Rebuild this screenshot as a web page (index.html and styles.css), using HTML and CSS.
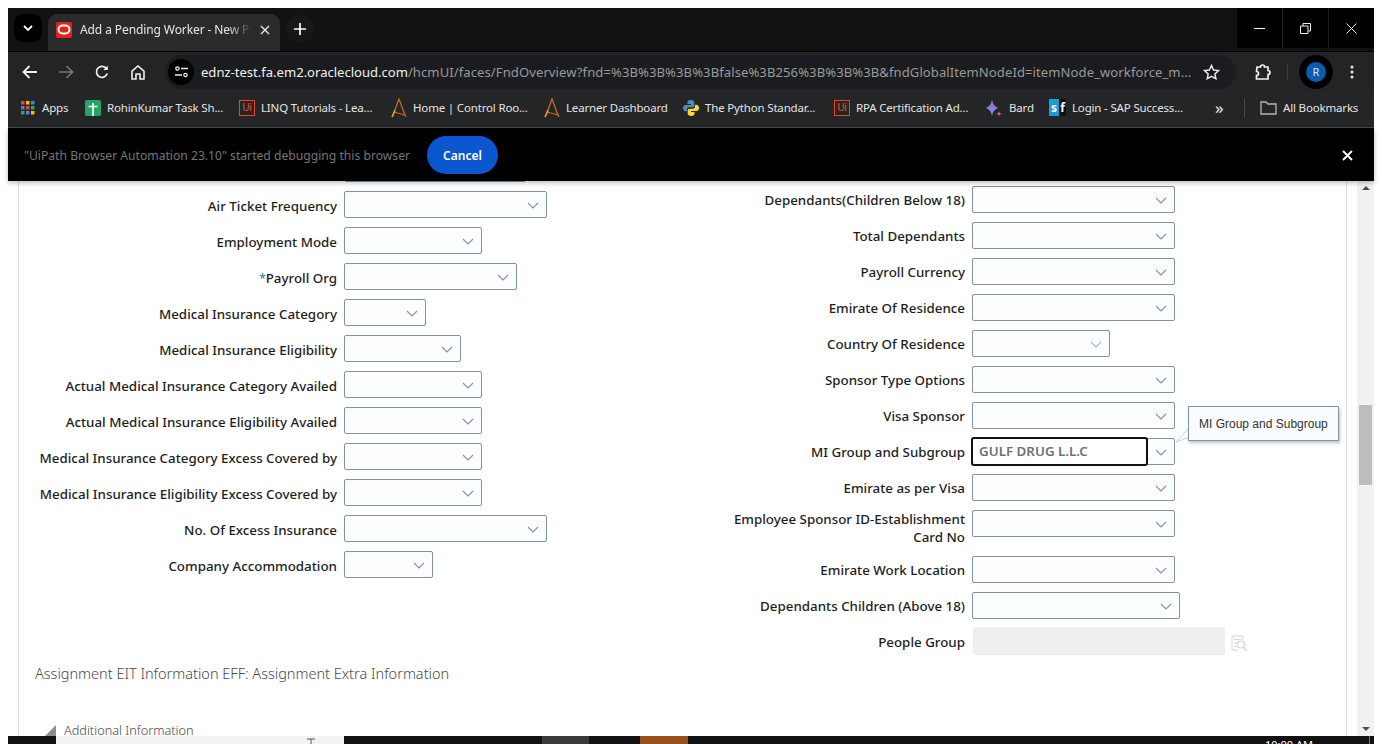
FILE: index.html
```html
<!DOCTYPE html>
<html lang="en">

<head>
    <meta charset="UTF-8">
    <title>Add a Pending Worker</title>
    <link rel="stylesheet" href="styles.css">
</head>

<body>
    <svg class="defs" width="0" height="0">
        <symbol id="chev" viewBox="0 0 12 7"><path d="M1 1l5 5 5-5" fill="none" stroke="currentColor" stroke-width="1.1"/></symbol>
        <symbol id="aa" viewBox="0 0 16 20"><path d="M1 19C4 13 6 6 8 1c2 5 4 12 7 18M3 14c3 1 7 2 11 3" fill="none" stroke="#c8642a" stroke-width="1.3"/><path d="M1 19c1-2 2-4 3-7" fill="none" stroke="#e3a82f" stroke-width="1.4"/></symbol>
    </svg>
    <div class="window">
        <div class="tabstrip">
            <div class="tab-search"><svg width="10" height="7" viewBox="0 0 10 7"><path d="M1 1l4 4 4-4" fill="none" stroke="#fff" stroke-width="1.8"/></svg></div>
            <div class="tab">
                <svg class="favicon" width="16" height="16" viewBox="0 0 16 16"><rect width="16" height="16" rx="2" fill="#e2231a"/><rect x="2.5" y="3.5" width="11" height="8" rx="4" fill="none" stroke="#fff" stroke-width="2"/></svg>
                <span class="tab-title">Add a Pending Worker - New Pe</span>
                <svg width="10" height="10" viewBox="0 0 10 10"><path d="M1 1l8 8M9 1l-8 8" stroke="#e8e8e8" stroke-width="1.4"/></svg>
            </div>
            <div class="new-tab"><svg width="12" height="12" viewBox="0 0 12 12"><path d="M6 0v12M0 6h12" stroke="#fff" stroke-width="1.7"/></svg></div>
            <div class="win-btns">
                <div class="win-btn"><svg width="11" height="11" viewBox="0 0 11 11"><path d="M0 5.5h11" stroke="#eee" stroke-width="1.1"/></svg></div>
                <div class="win-btn"><svg width="11" height="11" viewBox="0 0 11 11"><path d="M.5 3h7.5v7.500H.5zM3 3V.5h7.500V8H8" fill="none" stroke="#eee"/></svg></div>
                <div class="win-btn"><svg width="11" height="11" viewBox="0 0 11 11"><path d="M.5.5l10 10M10.500.5l-10 10" stroke="#eee"/></svg></div>
            </div>
        </div>

        <div class="toolbar">
            <div class="tool"><svg width="16" height="14" viewBox="0 0 16 14"><path d="M15 7H2M7.500 1L1.500 7l6 6" fill="none" stroke="#f0f0f0" stroke-width="1.8"/></svg></div>
            <div class="tool"><svg width="16" height="14" viewBox="0 0 16 14"><path d="M1 7h13M8.500 1l6 6-6 6" fill="none" stroke="#777" stroke-width="1.700"/></svg></div>
            <div class="tool"><svg width="14" height="14" viewBox="0 0 14 14"><path d="M12.200 8.500A5.500 5.500 0 1 1 11 3.100" fill="none" stroke="#f0f0f0" stroke-width="1.700"/><path d="M12.800.5v4.500H8.300z" fill="#f0f0f0"/></svg></div>
            <div class="tool"><svg width="14" height="15" viewBox="0 0 14 15"><path d="M1 6.200L7 1l6 5.200V14H9V9H5v5H1z" fill="none" stroke="#f0f0f0" stroke-width="1.600"/></svg></div>
            <div class="omnibox">
                <div class="site-info"><svg width="13" height="12" viewBox="0 0 13 12"><circle cx="2.500" cy="2.500" r="1.700" fill="none" stroke="#eee" stroke-width="1.200"/><path d="M6 2.500h7M0 9h7" stroke="#eee" stroke-width="1.300"/><circle cx="10.500" cy="9" r="1.700" fill="none" stroke="#eee" stroke-width="1.200"/></svg></div>
                <div class="url"><span class="host">ednz-test.fa.em2.oraclecloud.com</span>/hcmUI/faces/FndOverview?fnd=%3B%3B%3B%3Bfalse%3B256%3B%3B%3B&amp;fndGlobalItemNodeId=itemNode_workforce_m...</div>
                <svg class="star" width="17" height="16" viewBox="0 0 17 16"><path d="M8.500 1.500l2.100 4.500 4.900.6-3.600 3.300 1 4.800-4.400-2.400-4.300 2.400 1-4.800L1.500 6.600l4.900-.6z" fill="none" stroke="#e8e8e8" stroke-width="1.500"/></svg>
            </div>
            <div class="tool ext"><svg width="17" height="17" viewBox="0 0 17 17"><path d="M3 3h3.500a2 2 0 0 1 4 0H14v3.500a2 2 0 0 1 0 4V15H2.500v-3.500a2 2 0 0 0 0-4z" fill="none" stroke="#f2f2f2" stroke-width="1.700"/></svg></div>
            <div class="tool-sep"></div>
            <div class="avatar-ring"><div class="avatar">R</div></div>
            <div class="tool menu"><svg width="4" height="14" viewBox="0 0 4 14"><circle cx="2" cy="2" r="1.500" fill="#eee"/><circle cx="2" cy="7" r="1.500" fill="#eee"/><circle cx="2" cy="12" r="1.500" fill="#eee"/></svg></div>
        </div>

        <div class="bookmarks">
            <div class="bm">
                <svg class="bm-apps" width="14" height="14" viewBox="0 0 14 14"><path d="M0 0h3.500v3.500H0z" fill="#ea4335"/><path d="M5 0h3.500v3.500H5z" fill="#fbbc04"/><path d="M10 0h3.500v3.500H10z" fill="#4285f4"/><path d="M0 5h3.500v3.500H0z" fill="#4285f4"/><path d="M5 5h3.500v3.500H5z" fill="#ea4335"/><path d="M10 5h3.500v3.500H10z" fill="#34a853"/><path d="M0 10h3.500v3.500H0z" fill="#34a853"/><path d="M5 10h3.500v3.500H5z" fill="#4285f4"/><path d="M10 10h3.500v3.500H10z" fill="#fbbc04"/></svg>
                <span>Apps</span>
            </div>
            <div class="bm">
                <svg width="16" height="16" viewBox="0 0 16 16"><rect width="16" height="16" rx="1.500" fill="#23a566"/><path d="M8 3v13M3.500 6.500h9" stroke="#fff" stroke-width="1.700"/></svg>
                <span>RohinKumar Task Sh...</span>
            </div>
            <div class="bm"><span class="ui-logo">Ui</span><span>LINQ Tutorials - Lea...</span></div>
            <div class="bm"><svg width="16" height="20" viewBox="0 0 16 20"><use href="#aa"/></svg><span>Home | Control Roo...</span></div>
            <div class="bm"><svg width="16" height="20" viewBox="0 0 16 20"><use href="#aa"/></svg><span>Learner Dashboard</span></div>
            <div class="bm">
                <svg width="16" height="16" viewBox="0 0 16 16"><path d="M8 0C5 0 4.500 1.300 4.500 2.500V4H8v1H2.500C1 5 0 6.200 0 8s1 3.200 2.500 3.200H4V9.500C4 8 5 7.300 6.200 7.300h3.300c1 0 1.800-.8 1.800-1.800V2.500C11.300 1 10 0 8 0z" fill="#4b8bbe"/><path d="M8 16c3 0 3.500-1.300 3.500-2.500V12H8v-1h5.500C15 11 16 9.800 16 8s-1-3.200-2.500-3.200H12v1.700C12 8 11 8.700 9.800 8.700H6.500c-1 0-1.800.8-1.800 1.800v3C4.700 15 6 16 8 16z" fill="#ffd43b"/></svg>
                <span>The Python Standar...</span>
            </div>
            <div class="bm"><span class="ui-logo">Ui</span><span>RPA Certification Ad...</span></div>
            <div class="bm">
                <svg width="18" height="18" viewBox="0 0 18 18"><path d="M7 1c.6 4 2.500 6.500 6 8-3.500 1.500-5.400 4-6 8-.6-4-2.500-6.500-6-8 3.500-1.500 5.400-4 6-8z" fill="#6f8fe8"/><path d="M7 1c.6 4 2.500 6.500 6 8H1c3.500-1.500 5.400-4 6-8z" fill="#9a6fd8"/><path d="M14 12c.2 1.500.9 2.300 2.500 2.700-1.600.4-2.300 1.200-2.500 2.800-.2-1.600-.9-2.400-2.500-2.800 1.600-.4 2.300-1.200 2.500-2.700z" fill="#d8648a"/></svg>
                <span>Bard</span>
            </div>
            <div class="bm"><span class="sf-logo"><i>s</i><b>f</b></span><span>Login - SAP Success...</span></div>
            <div class="bm-more">»</div>
            <div class="bm-sep"></div>
            <div class="bm bm-all">
                <svg width="17" height="14" viewBox="0 0 17 14"><path d="M1 1h5l2 2h8v10H1z" fill="none" stroke="#b5b5b5" stroke-width="1.300"/></svg>
                <span>All Bookmarks</span>
            </div>
        </div>

        <div class="infobar">
            <span class="info-text">"UiPath Browser Automation 23.10" started debugging this browser</span>
            <span class="cancel">Cancel</span>
            <svg class="info-close" width="11" height="11" viewBox="0 0 11 11"><path d="M1 1l9 9M10 1l-9 9" stroke="#fff" stroke-width="1.800"/></svg>
        </div>

        <div class="content">
            <div class="page">
                <div class="sheet">
                    <div class="form">
                        <div class="col col-left">
                            <div class="row"><label></label><div class="select w182"></div></div>
                            <div class="row"><label>Air Ticket Frequency</label><div class="select w203"><svg><use href="#chev"/></svg></div></div>
                            <div class="row"><label>Employment Mode</label><div class="select w138"><svg><use href="#chev"/></svg></div></div>
                            <div class="row"><label><em>*</em>Payroll Org</label><div class="select w173"><svg><use href="#chev"/></svg></div></div>
                            <div class="row"><label>Medical Insurance Category</label><div class="select w82"><svg><use href="#chev"/></svg></div></div>
                            <div class="row"><label>Medical Insurance Eligibility</label><div class="select w117"><svg><use href="#chev"/></svg></div></div>
                            <div class="row"><label>Actual Medical Insurance Category Availed</label><div class="select w138"><svg><use href="#chev"/></svg></div></div>
                            <div class="row"><label>Actual Medical Insurance Eligibility Availed</label><div class="select w138"><svg><use href="#chev"/></svg></div></div>
                            <div class="row"><label>Medical Insurance Category Excess Covered by</label><div class="select w138"><svg><use href="#chev"/></svg></div></div>
                            <div class="row"><label>Medical Insurance Eligibility Excess Covered by</label><div class="select w138"><svg><use href="#chev"/></svg></div></div>
                            <div class="row"><label>No. Of Excess Insurance</label><div class="select w203"><svg><use href="#chev"/></svg></div></div>
                            <div class="row"><label>Company Accommodation</label><div class="select w89"><svg><use href="#chev"/></svg></div></div>
                        </div>
                        <div class="col col-right">
                            <div class="row"><label>Dependants(Children Below 18)</label><div class="select w203"><svg><use href="#chev"/></svg></div></div>
                            <div class="row"><label>Total Dependants</label><div class="select w203"><svg><use href="#chev"/></svg></div></div>
                            <div class="row"><label>Payroll Currency</label><div class="select w203"><svg><use href="#chev"/></svg></div></div>
                            <div class="row"><label>Emirate Of Residence</label><div class="select w203"><svg><use href="#chev"/></svg></div></div>
                            <div class="row"><label>Country Of Residence</label><div class="select select-soft w138"><svg><use href="#chev"/></svg></div></div>
                            <div class="row"><label>Sponsor Type Options</label><div class="select w203"><svg><use href="#chev"/></svg></div></div>
                            <div class="row"><label>Visa Sponsor</label><div class="select w203"><svg><use href="#chev"/></svg></div></div>
                            <div class="row"><label>MI Group and Subgroup</label>
                                <div class="select w203"><div class="focused">GULF DRUG L.L.C</div><svg><use href="#chev"/></svg></div>
                            </div>
                            <div class="row"><label>Emirate as per Visa</label><div class="select w203"><svg><use href="#chev"/></svg></div></div>
                            <div class="row row-tall"><label>Employee Sponsor ID-Establishment Card No</label><div class="select w203"><svg><use href="#chev"/></svg></div></div>
                            <div class="row"><label>Emirate Work Location</label><div class="select w203"><svg><use href="#chev"/></svg></div></div>
                            <div class="row"><label>Dependants Children (Above 18)</label><div class="select w208"><svg><use href="#chev"/></svg></div></div>
                            <div class="row"><label>People Group</label><div class="disabled"></div>
                                <svg class="lookup" width="16" height="17" viewBox="0 0 16 17"><path d="M12 5V1H1v14h6M3 4.500h7M3 8h3M3 11.500h3" fill="none" stroke="#d4d4d4"/><circle cx="10" cy="9.500" r="3.500" fill="none" stroke="#d4d4d4" stroke-width="1.200"/><path d="M12.500 12l3 3.500" stroke="#d4d4d4" stroke-width="1.200"/></svg>
                            </div>
                        </div>
                    </div>
                    <h2 class="section-title">Assignment EIT Information EFF: Assignment Extra Information</h2>
                    <div class="sub-head"><span class="tri"></span>Additional Information</div>
                </div>
            </div>
            <div class="scrollbar">
                <span class="arrow-up"></span>
                <div class="thumb"></div>
                <span class="arrow-down"></span>
            </div>
            <svg class="tip-tail" width="16" height="16" viewBox="0 0 16 16"><path d="M15 1v9L1 15z" fill="#fff"/><path d="M14 1L1 15l14-5" fill="none" stroke="#c3ced6"/></svg>
            <div class="tooltip">MI Group and Subgroup</div>
        </div>

        <div class="taskbar">
            <div class="task-search"><svg width="10" height="6" viewBox="0 0 10 6"><path d="M1 1h8M5 1v5" stroke="#555"/></svg></div>
            <div class="task-app"></div>
            <div class="task-hot"></div>
            <div class="task-time">10:00 AM</div>
            <div class="task-sep"></div>
        </div>
    </div>
</body>

</html>
```

FILE: styles.css
```css
* {
    box-sizing: border-box;
    margin: 0;
    padding: 0;
}

html,
body {
    height: 744px;
    overflow: hidden;
    background: #fff;
}

.defs {
    position: absolute;
}

.window {
    width: 1366px;
    height: 728px;
    margin: 8px 0 0 8px;
    font-family: "Noto Sans", sans-serif;
}

/* browser chrome */
.tabstrip {
    display: flex;
    height: 44px;
    background: #111213;
    border-bottom: 1px solid #000;
}

.tab-search {
    display: flex;
    align-items: center;
    justify-content: center;
    width: 28px;
    height: 28px;
    margin: 6px 0 0 6px;
    background: #000;
    border-radius: 9px;
}

.tab {
    display: flex;
    align-items: center;
    width: 232px;
    height: 37px;
    margin: 6px 0 0 6px;
    padding: 0 10px 6px 8px;
    background: #2a2b2d;
    border-radius: 9px 9px 0 0;
}

.favicon {
    flex: none;
}

.tab-title {
    flex: 1;
    margin: 0 8px;
    overflow: hidden;
    color: #e6e6e6;
    font-size: 12px;
    letter-spacing: -0.1px;
    white-space: nowrap;
    -webkit-mask-image: linear-gradient(to right, #000 86%, transparent 100%);
    mask-image: linear-gradient(to right, #000 86%, transparent 100%);
}

.new-tab {
    display: flex;
    align-items: center;
    justify-content: center;
    width: 28px;
    height: 28px;
    margin: 7px 0 0 6px;
    background: #161718;
    border-radius: 50%;
}

.win-btns {
    display: flex;
    gap: 1px;
    height: 40px;
    margin-left: auto;
    background: #1c1c1c;
}

.win-btn {
    display: flex;
    align-items: center;
    justify-content: center;
    width: 45px;
    background: #000;
}

.toolbar {
    display: flex;
    align-items: center;
    height: 40px;
    padding-left: 4px;
    background: #232426;
}

.tool {
    display: flex;
    align-items: center;
    justify-content: center;
    flex: none;
    width: 36px;
    height: 36px;
}

.omnibox {
    display: flex;
    align-items: center;
    width: 1071px;
    height: 34px;
    margin-left: 9px;
    background: #1a1c1f;
    border-radius: 17px;
}

.site-info {
    display: flex;
    align-items: center;
    justify-content: center;
    flex: none;
    width: 26px;
    height: 26px;
    margin-left: 3px;
    background: #000;
    border-radius: 50%;
}

.url {
    flex: none;
    width: 991px;
    margin-left: 7px;
    color: #9a9a9a;
    font-size: 13.050px;
    letter-spacing: 0.09px;
    white-space: nowrap;
}

.host {
    color: #f1f1f1;
    letter-spacing: 0;
}

.star {
    margin-left: 11px;
}

.ext {
    margin-left: 8px;
}

.tool-sep {
    width: 1px;
    height: 18px;
    margin-left: 7px;
    background: #3c3c3c;
}

.avatar-ring {
    display: flex;
    align-items: center;
    justify-content: center;
    width: 34px;
    height: 34px;
    margin-left: 11px;
    background: #000;
    border-radius: 50%;
}

.avatar {
    width: 20px;
    height: 20px;
    color: #d8e8f8;
    background: #0b5cad;
    border-radius: 50%;
    font-size: 11px;
    line-height: 20px;
    text-align: center;
}

.menu {
    margin-left: 1px;
}

.bookmarks {
    display: grid;
    grid-template-columns: 64px 154px 152px 153px 139px 151px 151px 64px 161px 34px 16px auto;
    align-items: center;
    height: 36px;
    padding: 0 0 4px 13px;
    background: #242527;
    border-bottom: 1px solid #4a4a4a;
}

.bm {
    display: flex;
    align-items: center;
    gap: 6px;
    color: #e4e4e4;
    font-size: 11.500px;
    letter-spacing: -0.17px;
    white-space: nowrap;
}

.bm svg {
    flex: none;
}

.bm-apps {
    margin-right: 1px;
}

.ui-logo {
    flex: none;
    width: 16px;
    height: 16px;
    color: #f0562a;
    border: 1.500px solid #e8481c;
    font-size: 10px;
    line-height: 13px;
    text-align: center;
}

.sf-logo {
    display: flex;
    flex: none;
    width: 17px;
    height: 17px;
    font-size: 12px;
    line-height: 17px;
    letter-spacing: 0;
}

.sf-logo i {
    width: 10px;
    color: #fff;
    background: #1a9cd8;
    font-style: normal;
    font-weight: 700;
    text-align: center;
}

.sf-logo b {
    width: 7px;
    color: #fff;
    background: #111;
    text-align: center;
}

.bm-more {
    padding-left: 5px;
    color: #eee;
    font-size: 17px;
    line-height: 20px;
}

.bm-sep {
    width: 1px;
    height: 18px;
    background: #484848;
}

.infobar {
    position: relative;
    z-index: 2;
    display: flex;
    align-items: center;
    height: 53px;
    padding-left: 16px;
    background: #000;
    box-shadow: 0 2px 5px rgba(0, 0, 0, 0.25);
}

.info-text {
    width: 403px;
    padding-top: 1px;
    color: #757575;
    font-size: 12.150px;
    white-space: nowrap;
}

.cancel {
    width: 71px;
    height: 38px;
    color: #fff;
    background: #0b57d0;
    border-radius: 19px;
    font-size: 12px;
    font-weight: 600;
    line-height: 39px;
    text-align: center;
}

.info-close {
    margin: 2px 21px 0 auto;
}

/* oracle page */
.content {
    position: relative;
    display: flex;
    height: 555px;
    overflow: hidden;
    background: #fff;
    color: #1d1d1d;
}

.page {
    flex: 1;
    padding-left: 10px;
    padding-right: 10px;
}

.sheet {
    height: 100%;
    border-left: 1px solid #d6dfe6;
    border-right: 1px solid #d6dfe6;
}

.form {
    display: grid;
    grid-template-columns: 681px 1fr;
}

.col-left {
    margin-top: -26px;
}

.col-left label {
    width: 318px;
    padding-top: 6px;
}

.col-right {
    margin-top: 5px;
}

.col-right label {
    width: 265px;
    padding-top: 5px;
}

.row {
    display: flex;
    gap: 7px;
    height: 27px;
    margin-bottom: 9px;
}

.row:last-child {
    margin-bottom: 0;
}

.row label {
    font-size: 13.350px;
    font-weight: 500;
    line-height: 18px;
    text-align: right;
}

.row label em {
    color: #2f7fc1;
    font-style: normal;
    font-size: 12px;
}

.row-tall {
    height: 37px;
}

.col-right .row-tall label {
    padding: 0 0 0 29px;
}

.select {
    position: relative;
    height: 27px;
    color: #84909a;
    background: #fcfdfe;
    border: 1px solid #80929f;
    border-radius: 2px;
}

.select-soft {
    color: #9fb8cc;
}

.select svg {
    position: absolute;
    top: 10px;
    right: 7px;
    width: 12px;
    height: 7px;
}

.w82 { width: 82px; }
.w89 { width: 89px; }
.w117 { width: 117px; }
.w138 { width: 138px; }
.w173 { width: 173px; }
.w182 { width: 182px; }
.w203 { width: 203px; }
.w208 { width: 208px; }

.focused {
    width: 177px;
    height: 29px;
    margin: -2px 0 0 -2px;
    padding-left: 6px;
    color: #707070;
    background: #fff;
    border: 2px solid #111;
    border-radius: 3px;
    font-size: 13.350px;
    font-weight: 600;
    line-height: 25px;
}

.disabled {
    width: 252px;
    height: 28px;
    margin: -1px 0 0 1px;
    background: #efeff0;
    border-radius: 2px;
}

.lookup {
    margin: 7px 0 0 -1px;
}

.section-title {
    margin: 8px 0 0 16px;
    color: #4a4a4a;
    font-size: 14.500px;
    font-weight: 300;
    line-height: 20px;
}

.sub-head {
    display: flex;
    align-items: center;
    gap: 8px;
    margin: 38px 0 0 26px;
    color: #4a4a4a;
    font-size: 12.700px;
    font-weight: 300;
    line-height: 18px;
}

.tri {
    width: 0;
    height: 0;
    border-bottom: 11px solid #8c8c8c;
    border-left: 11px solid transparent;
}

.scrollbar {
    display: flex;
    flex: none;
    flex-direction: column;
    align-items: center;
    width: 17px;
    background: #f1f1f1;
}

.arrow-up {
    width: 0;
    height: 0;
    margin-top: 5px;
    border-right: 4px solid transparent;
    border-bottom: 4px solid #505050;
    border-left: 4px solid transparent;
}

.thumb {
    width: 13px;
    height: 80px;
    margin-top: 215px;
    background: #bdbdbd;
}

.arrow-down {
    width: 0;
    height: 0;
    margin-top: auto;
    margin-bottom: 5px;
    border-top: 4px solid #505050;
    border-right: 4px solid transparent;
    border-left: 4px solid transparent;
}

.tooltip {
    position: absolute;
    top: 225px;
    left: 1180px;
    width: 151px;
    height: 35px;
    padding-left: 10px;
    color: #333;
    background: #fafbfc;
    border: 1px solid #7f97a8;
    box-shadow: 1px 2px 3px rgba(0, 0, 0, 0.25);
    font-family: "Liberation Sans", sans-serif;
    font-size: 12px;
    line-height: 34px;
}

.tip-tail {
    position: absolute;
    top: 246px;
    left: 1167px;
}

/* windows taskbar edge */
.taskbar {
    display: flex;
    height: 8px;
    overflow: hidden;
    background: #111;
}

.task-search {
    width: 288px;
    margin-left: 48px;
    padding-left: 250px;
    background: #f2f2f2;
}

.task-search svg {
    display: block;
    margin-top: 2px;
}

.task-app {
    width: 47px;
    margin-left: 198px;
    background: #3a3a3a;
}

.task-hot {
    width: 48px;
    margin-left: 51px;
    background: #98511c;
}

.task-time {
    margin-left: 577px;
    padding-top: 2px;
    color: #fff;
    font-size: 11px;
    line-height: 14px;
}

.task-sep {
    width: 1px;
    margin-left: 56px;
    background: #777;
}
```
